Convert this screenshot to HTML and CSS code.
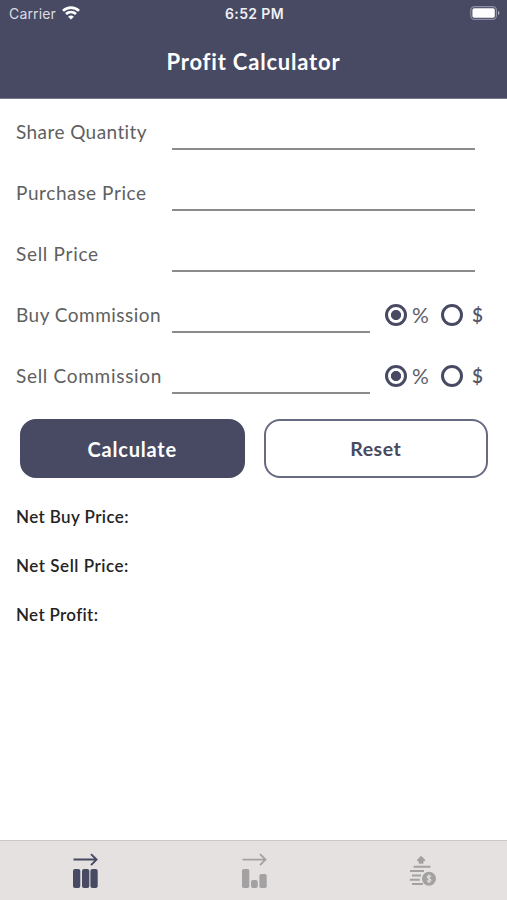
FILE: index.html
```html
<!DOCTYPE html>
<html lang="en">
<head>
<meta charset="utf-8">
<title>Profit Calculator</title>
<link rel="stylesheet" href="styles.css">
</head>
<body>
<header class="header">
  <div class="status">
    <div class="carrier"><span>Carrier</span>
      <svg class="wifi" width="18" height="14" viewBox="0 0 18 14" fill="none" stroke="#fff" stroke-width="2.7"><path d="M1 4.9C5.6.4 12.4.4 17 4.9M4 8.1c2.9-2.7 7.1-2.7 10 0"/><path d="M9 13.6 6.1 10.7c1.7-1.5 4.1-1.5 5.8 0z" fill="#fff" stroke="none"/></svg>
    </div>
    <time class="time">6:52 PM</time>
    <svg class="battery" width="30" height="14" viewBox="0 0 30 14"><rect x=".8" y=".6" width="25.6" height="12.8" rx="3.6" fill="none" stroke="#8d90a4" stroke-width="1.2"/><rect x="2.4" y="2.3" width="22.4" height="9.4" rx="1.8" fill="#fff"/><path d="M28 4.8q1.5.8 1.5 2.2T28 9.2z" fill="#a5a7b7"/></svg>
  </div>
  <h1 class="title">Profit Calculator</h1>
</header>
<main class="main">
  <form class="form">
    <div class="row"><label class="label quantity" for="qty">Share Quantity</label><input class="field" id="qty"></div>
    <div class="row"><label class="label purchase" for="buy">Purchase Price</label><input class="field" id="buy"></div>
    <div class="row"><label class="label" for="sell">Sell Price</label><input class="field" id="sell"></div>
    <div class="row"><label class="label buying" for="bc">Buy Commission</label><input class="field short" id="bc">
      <div class="units"><input class="radio" type="radio" name="b" checked><span class="unit">%</span><input class="radio" type="radio" name="b"><span class="unit dollar">$</span></div></div>
    <div class="row"><label class="label" for="sc">Sell Commission</label><input class="field short" id="sc">
      <div class="units"><input class="radio" type="radio" name="s" checked><span class="unit">%</span><input class="radio" type="radio" name="s"><span class="unit dollar">$</span></div></div>
    <div class="actions"><button class="button primary" type="button">Calculate</button><button class="button" type="reset">Reset</button></div>
  </form>
  <section class="results">
    <p class="result">Net Buy Price:</p>
    <p class="result selling">Net Sell Price:</p>
    <p class="result profit">Net Profit:</p>
  </section>
</main>
<nav class="tabs">
  <a class="tab active"><svg width="28" height="36" viewBox="0 0 28 36"><path d="M2.5 7.6h23M20 2.1l5.5 5.5-5.5 5.5" fill="none" stroke="currentColor" stroke-width="2"/><g fill="currentColor"><rect x="2" y="17" width="7.3" height="19" rx="2"/><rect x="11" y="17" width="7.3" height="19" rx="2"/><rect x="19.4" y="17" width="7.3" height="19" rx="2"/></g></svg></a>
  <a class="tab"><svg width="28" height="36" viewBox="0 0 28 36"><path d="M2.5 7.6h23M20 2.1l5.5 5.5-5.5 5.5" fill="none" stroke="currentColor" stroke-width="1.8"/><g fill="currentColor"><rect x="2" y="17" width="7.3" height="19" rx="1.8"/><rect x="11" y="28" width="6.8" height="8" rx="2"/><rect x="19.4" y="22" width="7.3" height="14" rx="1.8"/></g></svg></a>
  <a class="tab"><svg width="28" height="36" viewBox="0 0 28 36"><path d="M12.1 4.8 8.8 8.4h1.7V11h3.2V8.4h1.7z" fill="currentColor" stroke="currentColor" stroke-width="1.6" stroke-linejoin="round"/><path d="M4.5 14.8h17M1 19.1h14M3 23.5h9M.8 27.8h10M3 32.1h11" stroke="currentColor" stroke-width="2"/><circle cx="20" cy="26.7" r="5.5" fill="none" stroke="currentColor" stroke-width="3"/><circle cx="20" cy="26.7" r="5" fill="currentColor"/><path d="M21.9 24.9c-.4-1.4-3.6-1.3-3.6.1 0 1.7 3.6 1.5 3.6 3.4 0 1.5-3.3 1.5-3.8 0M20 22.5v8.7" fill="none" stroke="#e5e1e0" stroke-width="1.1"/></svg></a>
</nav>
</body>
</html>
```
FILE: styles.css
```css
* { box-sizing: border-box; }
body {
  margin: 0;
  height: 900px;
  display: flex;
  flex-direction: column;
  background: #fff;
  font-family: Lato, sans-serif;
  overflow: hidden;
}
.header {
  height: 99px;
  flex: none;
  background: #474a62;
  border-bottom: 1px solid #75778a;
  color: #fff;
}
.status {
  height: 27px;
  padding: 0 7px 0 9px;
  display: grid;
  grid-template-columns: 1fr auto 1fr;
  align-items: center;
  font: 14px/27px Inter, sans-serif;
}
.carrier { display: flex; align-items: center; gap: 6px; color: #dcdde4; letter-spacing: .15px; }
.wifi { margin-top: -1px; }
.time { font-weight: 600; font-size: 14px; letter-spacing: .35px; color: #eff0f4; }
.battery { justify-self: end; margin-top: -1px; }
.title {
  margin: 0;
  text-align: center;
  font-size: 22px;
  line-height: 70px;
  font-weight: 700;
  letter-spacing: .8px;
}
.main { flex: 1; padding-top: 2px; }
.row { height: 61px; padding-left: 16px; display: flex; align-items: center; }
.label { width: 156px; flex: none; color: #606060; font-size: 19px; letter-spacing: .7px; white-space: nowrap; }
.quantity { letter-spacing: .42px; }
.purchase { letter-spacing: .6px; }
.buying { letter-spacing: .49px; }
.field {
  width: 303px;
  height: 37px;
  padding: 0;
  border: 0;
  border-bottom: 2px solid #8b8b8b;
  border-radius: 0;
  background: none;
  font: inherit;
  outline: 0;
}
.short { width: 198px; }
.units { display: flex; align-items: center; margin-left: 15px; }
.radio {
  appearance: none;
  width: 22px;
  height: 22px;
  margin: 0;
  border: 3px solid #474a62;
  border-radius: 50%;
  background: #fff;
}
.radio:checked { background: radial-gradient(circle, #474a62 4.7px, #fff 5.4px); }
.unit { width: 34px; padding-left: 5px; color: #606168; font-size: 21px; line-height: 22px; }
.dollar { padding-left: 9px; color: #55576b; font-size: 19px; font-weight: 600; }
.actions { display: flex; gap: 19px; padding: 13px 19px 0 20px; }
.button {
  flex: 1;
  height: 59px;
  border: 2px solid #686a82;
  border-radius: 16px;
  background: #fff;
  color: #474a62;
  font: 700 19.5px Lato, sans-serif;
  letter-spacing: .5px;
}
.primary { background: #474a62; border-color: #474a62; color: #fff; font-size: 20px; letter-spacing: .8px; }
.results { padding: 14px 16px; }
.result { margin: 0; line-height: 49px; color: #242424; font-size: 17px; font-weight: 600; letter-spacing: .4px; }
.selling { letter-spacing: .53px; }
.profit { letter-spacing: .33px; }
.tabs {
  height: 60px;
  flex: none;
  display: grid;
  grid-template-columns: repeat(3, 1fr);
  background: #e5e1e0;
  border-top: 1px solid #cbc8c7;
}
.tab { display: flex; justify-content: center; padding-top: 11px; color: #a3a1a1; }
.active { color: #474a62; }
```
